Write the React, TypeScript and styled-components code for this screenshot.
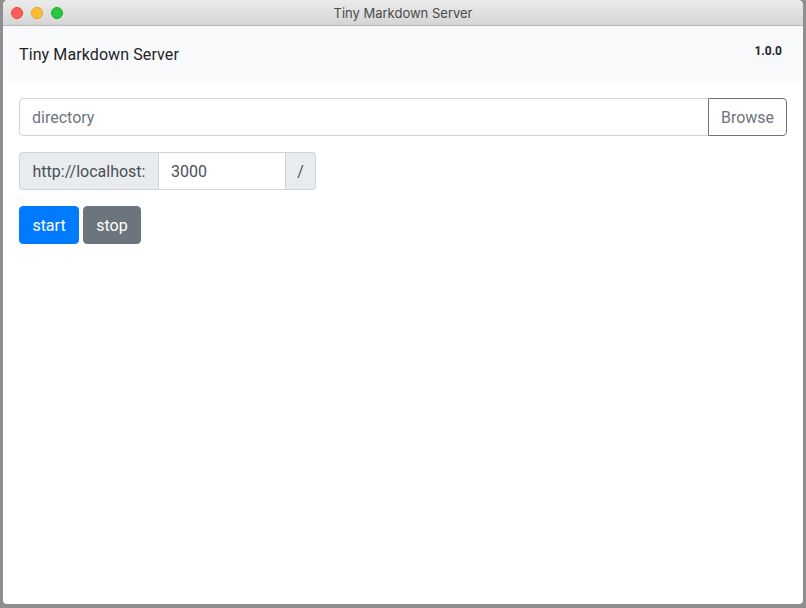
import React from "react";
import styled, { createGlobalStyle } from "styled-components";

const Global = createGlobalStyle`
  html, body { margin: 0; padding: 0; background: #8e8e90; }
  body { font-family: Roboto, "Noto Sans", sans-serif; }
  * { box-sizing: border-box; }
`;

const Screen = styled.div`
  width: 806px;
  height: 608px;
  padding: 0 3px 4px 3px;
  display: flex;
`;

const Window = styled.div`
  flex: 1;
  display: flex;
  flex-direction: column;
  background: #fff;
  border-radius: 5px 5px 4px 4px;
  overflow: hidden;
`;

const TitleBar = styled.div`
  height: 26px;
  flex: none;
  display: flex;
  align-items: center;
  position: relative;
  background: linear-gradient(#ebebeb, #d5d5d5);
  border-bottom: 1px solid #b9b9b9;
`;

const Lights = styled.div`
  display: flex;
  gap: 8px;
  padding-left: 8px;
`;

const Light = styled.span<{ $c: string; $b: string }>`
  width: 12px;
  height: 12px;
  border-radius: 50%;
  background: ${(p) => p.$c};
  border: 0.5px solid ${(p) => p.$b};
`;

const Title = styled.div`
  position: absolute;
  left: 0;
  right: 0;
  text-align: center;
  font-family: Inter, sans-serif;
  font-size: 13px;
  color: #4a4a4a;
  pointer-events: none;
`;

const NavBar = styled.div`
  height: 55px;
  background: #f8f9fa;
  display: flex;
  justify-content: space-between;
  align-items: flex-start;
  padding: 0 21px 0 16px;
`;

const Brand = styled.div`
  font-size: 16px;
  color: #212529;
  margin-top: 19px;
  letter-spacing: 0.1px;
`;

const Version = styled.div`
  font-size: 12px;
  font-weight: 700;
  color: #212529;
  margin-top: 18px;
`;

const Content = styled.div`
  padding: 17px 16px 0 16px;
  display: flex;
  flex-direction: column;
  gap: 16px;
`;

const Group = styled.div<{ $w?: string }>`
  display: flex;
  height: 38px;
  width: ${(p) => p.$w || "auto"};
`;

const Field = styled.input<{ $flex?: boolean; $w?: string; $mid?: boolean }>`
  height: 38px;
  ${(p) => (p.$flex ? "flex: 1;" : `width: ${p.$w};`)}
  min-width: 0;
  border: 1px solid #ced4da;
  padding: 6px 12px;
  font: inherit;
  font-size: 16px;
  color: #495057;
  outline: none;
  border-radius: ${(p) => (p.$mid ? "0" : "4px 0 0 4px")};
  &::placeholder { color: #6c757d; }
`;

const Addon = styled.div<{ $side: "left" | "right"; $w: string }>`
  height: 38px;
  width: ${(p) => p.$w};
  flex: none;
  display: flex;
  align-items: center;
  justify-content: center;
  background: #e9ecef;
  border: 1px solid #ced4da;
  font-size: 16px;
  color: #495057;
  border-radius: ${(p) => (p.$side === "left" ? "4px 0 0 4px" : "0 4px 4px 0")};
  ${(p) => (p.$side === "left" ? "border-right: none;" : "border-left: none;")}
`;

const OutlineButton = styled.button`
  height: 38px;
  width: 79px;
  padding: 0;
  background: #fff;
  border: 1px solid #6c757d;
  border-radius: 0 4px 4px 0;
  color: #6c757d;
  font: inherit;
  font-size: 16px;
  margin-left: -1px;
`;

const Buttons = styled.div`
  display: flex;
  gap: 4px;
`;

const Button = styled.button<{ $bg: string; $w: string }>`
  height: 38px;
  width: ${(p) => p.$w};
  padding: 0;
  background: ${(p) => p.$bg};
  border: 1px solid ${(p) => p.$bg};
  border-radius: 4px;
  color: #fff;
  font: inherit;
  font-size: 16px;
`;

export default function App() {
  return (
    <>
      <Global />
      <Screen>
        <Window>
          <TitleBar>
            <Lights>
              <Light $c="#fe5f57" $b="#e0443e" />
              <Light $c="#febc2e" $b="#dea123" />
              <Light $c="#28c840" $b="#1aab29" />
            </Lights>
            <Title>Tiny Markdown Server</Title>
          </TitleBar>
          <NavBar>
            <Brand>Tiny Markdown Server</Brand>
            <Version>1.0.0</Version>
          </NavBar>
          <Content>
            <Group>
              <Field $flex placeholder="directory" />
              <OutlineButton>Browse</OutlineButton>
            </Group>
            <Group $w="297px">
              <Addon $side="left" $w="139px">http://localhost:</Addon>
              <Field $w="128px" $mid defaultValue="3000" />
              <Addon $side="right" $w="30px">/</Addon>
            </Group>
            <Buttons>
              <Button $bg="#007bff" $w="60px">start</Button>
              <Button $bg="#6c757d" $w="58px">stop</Button>
            </Buttons>
          </Content>
        </Window>
      </Screen>
    </>
  );
}
